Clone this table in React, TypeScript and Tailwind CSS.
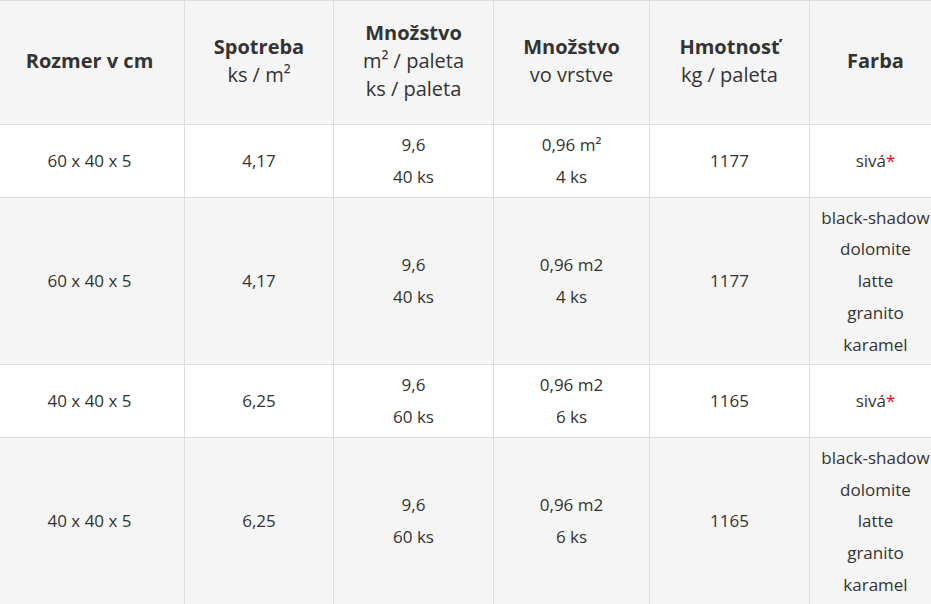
const rows = [
  {
    size: "60 x 40 x 5",
    usage: "4,17",
    perPallet: ["9,6", "40 ks"],
    perLayer: ["0,96 m²", "4 ks"],
    weight: "1177",
    colors: null,
  },
  {
    size: "60 x 40 x 5",
    usage: "4,17",
    perPallet: ["9,6", "40 ks"],
    perLayer: ["0,96 m2", "4 ks"],
    weight: "1177",
    colors: ["black-shadow", "dolomite", "latte", "granito", "karamel"],
  },
  {
    size: "40 x 40 x 5",
    usage: "6,25",
    perPallet: ["9,6", "60 ks"],
    perLayer: ["0,96 m2", "6 ks"],
    weight: "1165",
    colors: null,
  },
  {
    size: "40 x 40 x 5",
    usage: "6,25",
    perPallet: ["9,6", "60 ks"],
    perLayer: ["0,96 m2", "6 ks"],
    weight: "1165",
    colors: ["black-shadow", "dolomite", "latte", "granito", "karamel"],
  },
];

export default function App() {
  return (
    <div className="w-[931px] h-[604px] overflow-hidden bg-white font-['Open_Sans',sans-serif] text-[#333]">
      <table className="ml-[-6px] w-[947px] table-fixed border-collapse text-center">
        <colgroup>
          <col className="w-[190px]" />
          <col className="w-[149px]" />
          <col className="w-[160px]" />
          <col className="w-[156px]" />
          <col className="w-[160px]" />
          <col className="w-[132px]" />
        </colgroup>
        {/* header */}
        <thead>
          <tr className="bg-[#f5f5f5] text-[20px] leading-[28px]">
            <th className="h-[124px] border border-[#dddddd] pb-1 align-middle font-bold">Rozmer v cm</th>
            <th className="border border-[#dddddd] pb-1 align-middle">
              <b className="block font-bold">Spotreba</b>
              <span className="block font-normal">ks / m²</span>
            </th>
            <th className="border border-[#dddddd] pb-1 align-middle">
              <b className="block font-bold">Množstvo</b>
              <span className="block font-normal">m² / paleta</span>
              <span className="block font-normal">ks / paleta</span>
            </th>
            <th className="border border-[#dddddd] pb-1 align-middle">
              <b className="block font-bold">Množstvo</b>
              <span className="block font-normal">vo vrstve</span>
            </th>
            <th className="border border-[#dddddd] pb-1 align-middle">
              <b className="block font-bold">Hmotnosť</b>
              <span className="block font-normal">kg / paleta</span>
            </th>
            <th className="border border-[#dddddd] pb-1 align-middle font-bold">Farba</th>
          </tr>
        </thead>
        {/* body */}
        <tbody className="text-[17px] leading-[31.75px]">
          {rows.map((row, i) => (
            <tr key={i} className={i % 2 === 0 ? "bg-white" : "bg-[#f5f5f5]"}>
              <td className="border border-[#dddddd] py-1 align-middle">{row.size}</td>
              <td className="border border-[#dddddd] py-1 align-middle">{row.usage}</td>
              <td className="border border-[#dddddd] py-1 align-middle">
                {row.perPallet.map((t) => (
                  <span key={t} className="block">{t}</span>
                ))}
              </td>
              <td className="border border-[#dddddd] py-1 align-middle">
                {row.perLayer.map((t) => (
                  <span key={t} className="block">{t}</span>
                ))}
              </td>
              <td className="border border-[#dddddd] py-1 align-middle">{row.weight}</td>
              <td className="border border-[#dddddd] py-1 align-middle">
                {row.colors ? (
                  row.colors.map((c) => (
                    <span key={c} className="block whitespace-nowrap">{c}</span>
                  ))
                ) : (
                  <span>
                    sivá<span className="text-[#e30613]">*</span>
                  </span>
                )}
              </td>
            </tr>
          ))}
        </tbody>
      </table>
    </div>
  );
}
